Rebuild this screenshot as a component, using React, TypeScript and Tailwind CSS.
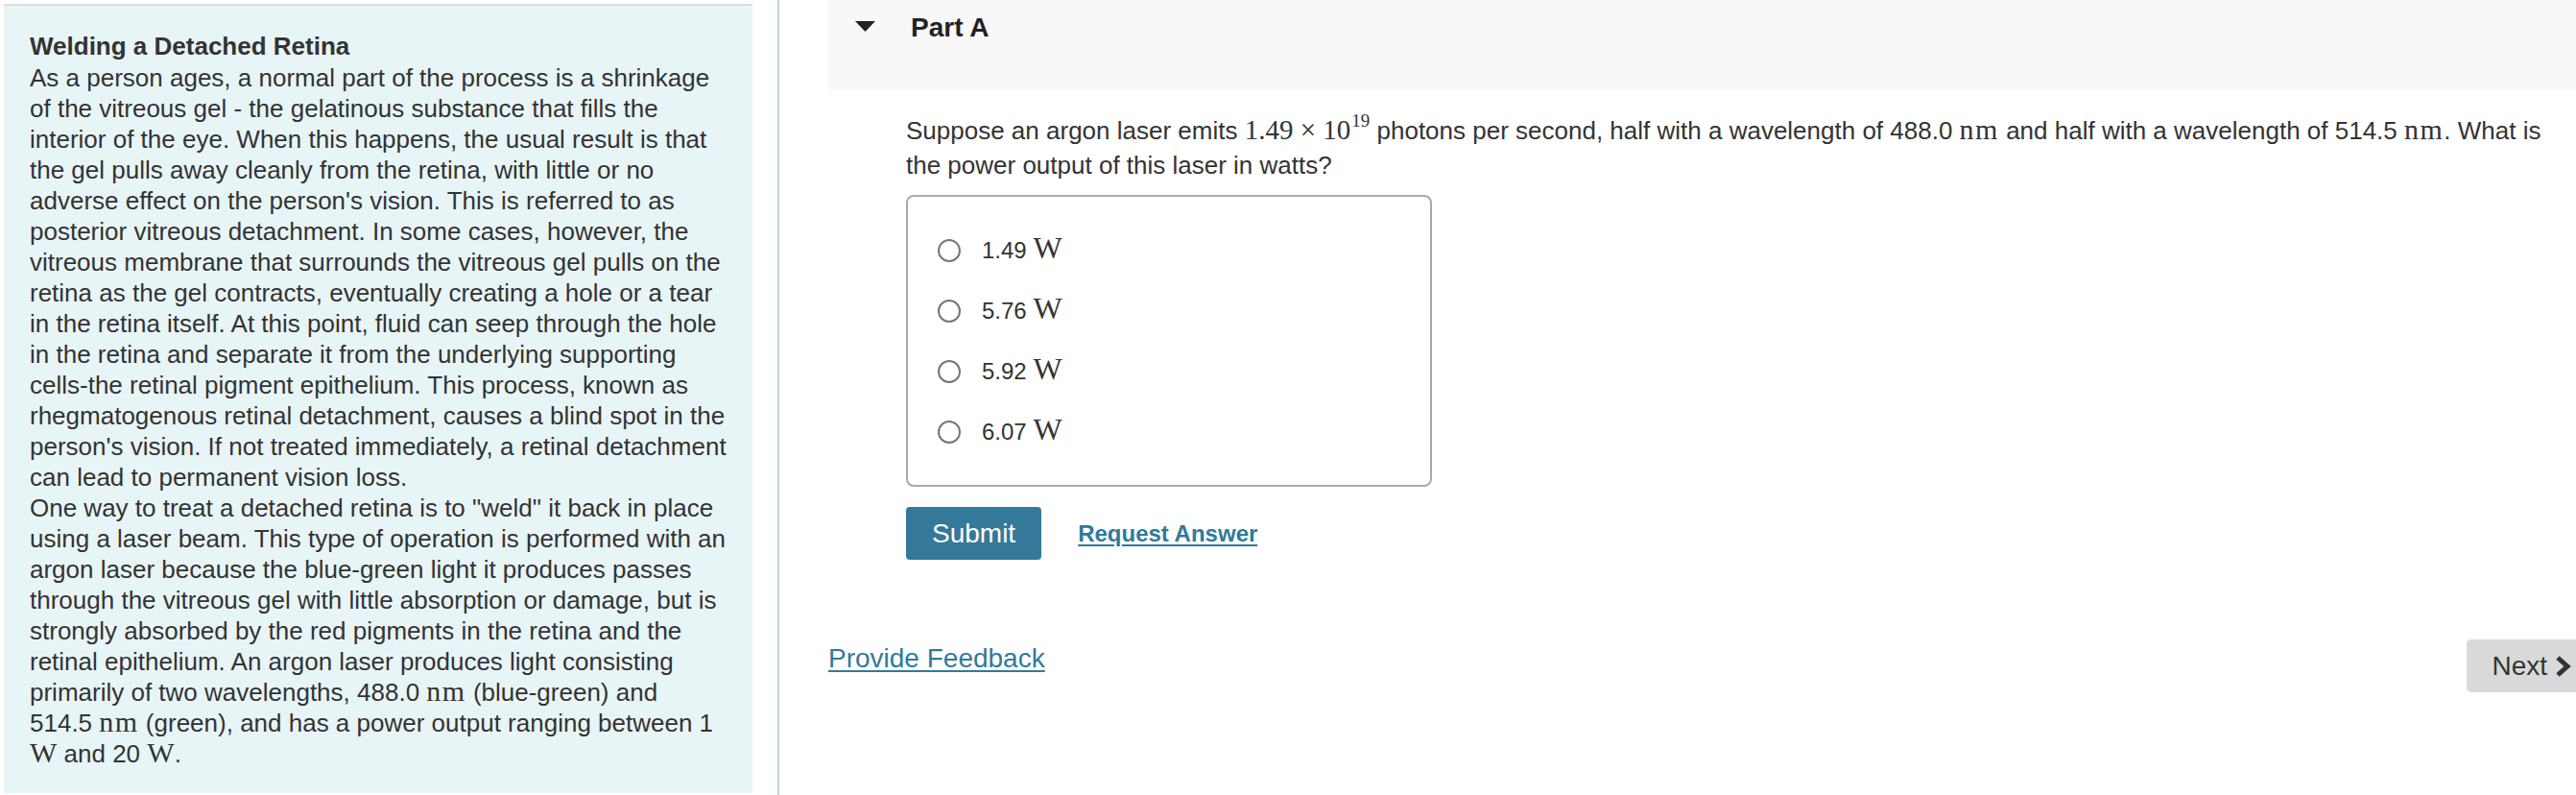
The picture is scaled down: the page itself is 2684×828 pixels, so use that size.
import React from 'react';

const M: React.FC<{ children: React.ReactNode; className?: string }> = ({ children, className = '' }) => (
  <span className={`inline-block font-['Liberation_Serif','DejaVu_Serif',serif] leading-[24px] ${className}`}>{children}</span>
);

const Nm: React.FC = () => <M className="text-[30px] tracking-[1.5px]">nm</M>;

const options = ['1.49', '5.76', '5.92', '6.07'];

const Intro: React.FC = () => (
  <aside className="mt-[4px] ml-[4px] w-[780px] h-[822px] shrink-0 border-t-2 border-[#dcdcdc] bg-[#e8f5f7] pl-[27px] pr-[27px] pt-[25px]">
    <h2 className="text-[26px] leading-[34px] font-bold">Welding a Detached Retina</h2>
    <p className="text-[26px] leading-[32px]">
      As a person ages, a normal part of the process is a shrinkage of the vitreous gel - the gelatinous substance that
      fills the interior of the eye. When this happens, the usual result is that the gel pulls away cleanly from the
      retina, with little or no adverse effect on the person's vision. This is referred to as posterior vitreous
      detachment. In some cases, however, the vitreous membrane that surrounds the vitreous gel pulls on the retina as
      the gel contracts, eventually creating a hole or a tear in the retina itself. At this point, fluid can seep
      through the hole in the retina and separate it from the underlying supporting cells-the retinal pigment
      epithelium. This process, known as rhegmatogenous retinal detachment, causes a blind spot in the person's vision.
      If not treated immediately, a retinal detachment can lead to permanent vision loss.
    </p>
    <p className="text-[26px] leading-[32px]">
      One way to treat a detached retina is to "weld" it back in place using a laser beam. This type of operation is
      performed with an argon laser because the blue-green light it produces passes through the vitreous gel with
      little absorption or damage, but is strongly absorbed by the red pigments in the retina and the retinal
      epithelium. An argon laser produces light consisting primarily of two wavelengths, 488.0 <Nm /> (blue-green)
      and 514.5 <Nm /> (green), and has a power output ranging between 1 <M className="text-[30px]">W</M> and 20{' '}
      <M className="text-[30px]">W</M>.
    </p>
  </aside>
);

const PartA: React.FC = () => (
  <div className="flex flex-col">
    <div className="h-[94px] bg-[#f8f8f8] flex items-start pt-[12px] pl-[28px]">
      <div className="flex items-center h-[34px] gap-[37px]">
        <svg width="21" height="11" viewBox="0 0 21 11" className="mt-[-3px]">
          <polygon points="0,0 21,0 10.5,11" fill="#222" />
        </svg>
        <h3 className="text-[28px] font-bold leading-[34px] text-[#222]">Part A</h3>
      </div>
    </div>

    <div className="pl-[81px] pr-[6px]">
      <p className="mt-[24px] text-[26px] leading-[36px]">
        Suppose an argon laser emits{' '}
        <M className="text-[29px]">
          1.49 × 10<sup className="text-[19px] leading-none align-baseline relative top-[-13px] ml-[1px]">19</sup>
        </M>{' '}
        photons per second, half with a wavelength of 488.0 <Nm /> and half with a wavelength of 514.5 <Nm />. What
        is the power output of this laser in watts?
      </p>

      <div className="mt-[13px] w-[548px] border-2 border-[#a9a9a9] rounded-[8px] py-[24px] pl-[31px]">
        {options.map((o) => (
          <label key={o} className="flex items-center h-[63px] gap-[22px]">
            <span className="w-[24px] h-[24px] rounded-full border-2 border-[#767676] bg-white" />
            <span className="text-[24px] leading-[32px]">
              {o} <M className="text-[32px]">W</M>
            </span>
          </label>
        ))}
      </div>

      <div className="mt-[21px] flex items-center gap-[38px]">
        <button className="h-[55px] px-[27px] rounded-[4px] bg-[#34799a] text-white text-[28px]">Submit</button>
        <a className="text-[24px] font-bold text-[#2f7a9c] underline underline-offset-[3px]">Request Answer</a>
      </div>
    </div>

    <div className="mt-[85px] flex items-start justify-between">
      <a className="mt-[2px] text-[28px] leading-[32px] text-[#2f7a9c] underline underline-offset-[3px]">Provide Feedback</a>
      <button className="mt-[-2px] mr-[-22px] h-[55px] pl-[26px] pr-[26px] rounded-[5px] bg-[#d9d9d9] text-[28px] text-[#333] flex items-center gap-[8px]">
        Next
        <svg width="18" height="22" viewBox="0 0 18 22">
          <path d="M3 2 L13 11 L3 20" stroke="#333" strokeWidth="5" fill="none" strokeLinejoin="miter" />
        </svg>
      </button>
    </div>
  </div>
);

export default function App() {
  return (
    <div className="flex w-[2684px] h-[828px] overflow-hidden bg-white text-[#333] font-['Liberation_Sans',Arial,sans-serif]">
      <Intro />
      <div className="ml-[26px] w-[2px] shrink-0 bg-[#c3d2de]" />
      <div className="flex-1 pl-[51px] min-w-0">
        <PartA />
      </div>
    </div>
  );
}
